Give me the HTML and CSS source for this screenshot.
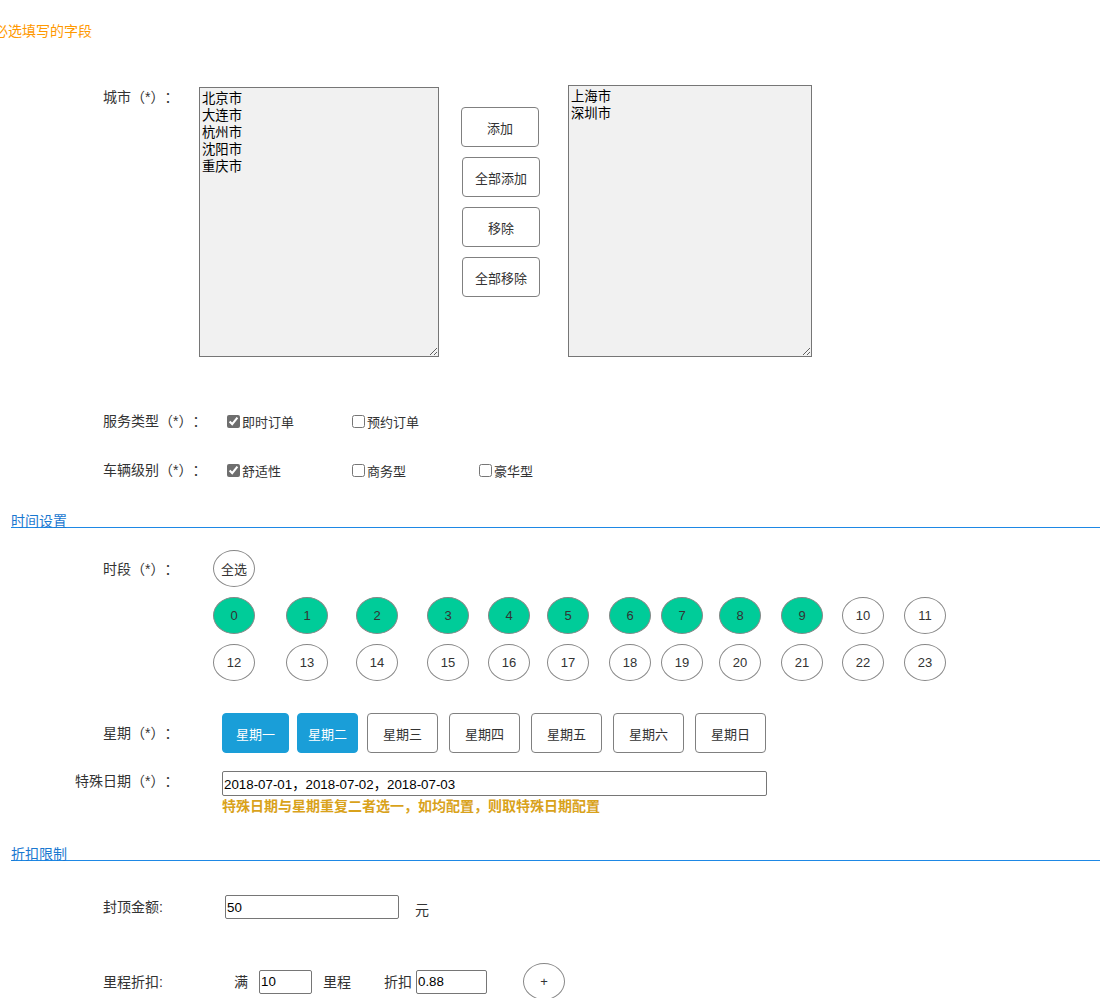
FILE: index.html
```html
<!DOCTYPE html>
<html lang="zh-CN">
<head>
<meta charset="utf-8">
<title>配置</title>
<link rel="stylesheet" href="styles.css">
</head>
<body>
<div class="page">
  <p class="required-note">必选填写的字段</p>

  <div class="row city-row">
    <span class="label city-label">城市（*）：</span>
    <textarea class="list list-left">北京市
大连市
杭州市
沈阳市
重庆市</textarea>
    <div class="transfer-btns">
      <button class="t-btn t-btn-first">添加</button>
      <button class="t-btn">全部添加</button>
      <button class="t-btn">移除</button>
      <button class="t-btn">全部移除</button>
    </div>
    <textarea class="list list-right">上海市
深圳市</textarea>
  </div>

  <div class="row check-row service-row">
    <span class="label check-label">服务类型（*）：</span>
    <label class="opt"><input type="checkbox" checked><span>即时订单</span></label>
    <label class="opt"><input type="checkbox"><span>预约订单</span></label>
  </div>

  <div class="row check-row vehicle-row">
    <span class="label check-label">车辆级别（*）：</span>
    <label class="opt"><input type="checkbox" checked><span>舒适性</span></label>
    <label class="opt"><input type="checkbox"><span>商务型</span></label>
    <label class="opt opt-third"><input type="checkbox"><span>豪华型</span></label>
  </div>

  <div class="section-title time-title">时间设置</div>

  <div class="row period-row">
    <span class="label period-label">时段（*）：</span>
    <button class="circle">全选</button>
  </div>

  <div class="hours">
    <button class="circle on">0</button>
    <button class="circle on">1</button>
    <button class="circle on">2</button>
    <button class="circle on">3</button>
    <button class="circle on">4</button>
    <button class="circle on">5</button>
    <button class="circle on">6</button>
    <button class="circle on">7</button>
    <button class="circle on">8</button>
    <button class="circle on">9</button>
    <button class="circle">10</button>
    <button class="circle">11</button>
    <button class="circle">12</button>
    <button class="circle">13</button>
    <button class="circle">14</button>
    <button class="circle">15</button>
    <button class="circle">16</button>
    <button class="circle">17</button>
    <button class="circle">18</button>
    <button class="circle">19</button>
    <button class="circle">20</button>
    <button class="circle">21</button>
    <button class="circle">22</button>
    <button class="circle">23</button>
  </div>

  <div class="row week-row">
    <span class="label week-label">星期（*）：</span>
    <button class="week-btn on mon">星期一</button>
    <button class="week-btn on tue">星期二</button>
    <button class="week-btn wed">星期三</button>
    <button class="week-btn">星期四</button>
    <button class="week-btn">星期五</button>
    <button class="week-btn">星期六</button>
    <button class="week-btn">星期日</button>
  </div>

  <div class="row date-row">
    <span class="label date-label">特殊日期（*）：</span>
    <input class="text-input date-input" type="text" value="2018-07-01，2018-07-02，2018-07-03">
  </div>
  <p class="hint">特殊日期与星期重复二者选一，如均配置，则取特殊日期配置</p>

  <div class="section-title discount-title">折扣限制</div>

  <div class="row cap-row">
    <span class="label cap-label">封顶金额:</span>
    <input class="text-input cap-input" type="text" value="50">
    <span class="unit">元</span>
  </div>

  <div class="row mile-row">
    <span class="label mile-label">里程折扣:</span>
    <span class="word">满</span>
    <input class="text-input small-input" type="text" value="10">
    <span class="word mile-word">里程</span>
    <span class="word disc-word">折扣</span>
    <input class="text-input rate-input" type="text" value="0.88">
    <button class="circle plus">+</button>
  </div>
</div>
</body>
</html>
```

FILE: styles.css
```css
html, body {
  margin: 0;
  padding: 0;
  background: #fff;
}

body {
  font-family: "Liberation Sans", "Noto Sans CJK SC", sans-serif;
  font-size: 14px;
  color: #333;
  overflow: hidden;
  text-spacing-trim: space-all;
}

.page {
  width: 1100px;
}

.required-note {
  margin: 21px 0 0 -6px;
  line-height: 20px;
  color: #ff9900;
}

.row {
  display: flex;
}

.label {
  flex: none;
  line-height: 20px;
  color: #333;
  text-spacing-trim: space-all;
}

/* City transfer */
.city-row {
  margin-top: 44px;
  align-items: flex-start;
}

.city-label {
  margin-left: 103px;
  width: 96px;
  margin-top: 2px;
}

.list {
  box-sizing: border-box;
  margin: 0;
  padding: 2px;
  border: 1px solid #767676;
  background: #f1f1f1;
  font-family: "Liberation Sans", "Noto Sans CJK SC", sans-serif;
  font-size: 13.33px;
  line-height: 17px;
  color: #000;
  overflow: hidden;
}

.list-left {
  width: 240px;
  height: 270px;
  margin-top: 2px;
}

.list-right {
  width: 244px;
  height: 272px;
  margin-left: 28px;
}

.transfer-btns {
  display: flex;
  flex-direction: column;
  gap: 10px;
  margin-left: 23px;
  margin-top: 22px;
}

.t-btn {
  box-sizing: border-box;
  width: 78px;
  height: 40px;
  border: 1px solid #808080;
  border-radius: 4px;
  background: #fff;
  font-family: "Liberation Sans", "Noto Sans CJK SC", sans-serif;
  font-size: 13px;
  color: #333;
  padding: 0;
}

.t-btn-first {
  margin-left: -1px;
}

/* Checkbox rows */
.check-row {
  align-items: center;
  height: 20px;
}

.service-row {
  margin-top: 54px;
}

.vehicle-row {
  margin-top: 29px;
}

.check-label {
  margin-left: 103px;
  width: 124px;
}

.opt {
  display: inline-flex;
  align-items: center;
  width: 125px;
  font-size: 13px;
  color: #333;
}

.opt-third {
  margin-left: 2px;
}

.opt input {
  margin: 0 2px 0 0;
  width: 13px;
  height: 13px;
  accent-color: #6e6e6e;
}

/* Section titles */
.section-title {
  margin-left: 11px;
  line-height: 12px;
  height: 12px;
  color: #1a78d0;
  border-bottom: 1px solid #1e88e5;
}

.time-title {
  margin-top: 35px;
}

/* Period */
.period-row {
  margin-top: 22px;
  align-items: center;
}

.period-label {
  margin-left: 103px;
  width: 110px;
}

.circle {
  box-sizing: border-box;
  width: 42px;
  height: 37px;
  border: 1px solid #888;
  border-radius: 50%;
  background: #fff;
  padding: 0;
  font-family: "Liberation Sans", "Noto Sans CJK SC", sans-serif;
  font-size: 13px;
  color: #333;
}

.circle.on {
  background: #00cc99;
}

.hours {
  display: grid;
  grid-template-columns: 73px 70px 71px 61px 59px 62px 52px 58px 62px 61px 62px 42px;
  grid-auto-rows: 37px;
  row-gap: 10px;
  margin: 10px 0 0 213px;
}

/* Week */
.week-row {
  margin-top: 32px;
  align-items: center;
}

.week-label {
  margin-left: 103px;
  width: 119px;
}

.week-btn {
  box-sizing: border-box;
  height: 40px;
  width: 71px;
  margin-left: 11px;
  border: 1px solid #808080;
  border-radius: 4px;
  background: #fff;
  padding: 0;
  font-family: "Liberation Sans", "Noto Sans CJK SC", sans-serif;
  font-size: 13px;
  color: #333;
}

.week-btn.on {
  background: #1a9ed8;
  border-color: #1a9ed8;
  color: #fff;
}

.week-btn.mon {
  width: 67px;
  margin-left: 0;
}

.week-btn.tue {
  width: 61px;
  margin-left: 8px;
}

.week-btn.wed {
  margin-left: 9px;
}

/* Special date */
.date-row {
  margin-top: 18px;
  align-items: flex-start;
}

.date-label {
  margin-left: 75px;
  width: 147px;
}

.text-input {
  box-sizing: border-box;
  margin: 0;
  padding: 0 1px;
  border: 1px solid #767676;
  border-radius: 2px;
  background: #fff;
  font-family: "Liberation Sans", "Noto Sans CJK SC", sans-serif;
  font-size: 13.33px;
  color: #000;
  outline: none;
  text-spacing-trim: space-all;
}

.date-input {
  width: 545px;
  height: 25px;
}

.hint {
  margin: 0 0 0 222px;
  line-height: 20px;
  font-weight: bold;
  color: #d9a21b;
}

.discount-title {
  margin-top: 32px;
}

/* Discount rows */
.cap-row {
  margin-top: 34px;
  align-items: center;
}

.cap-label {
  margin-left: 103px;
  width: 122px;
}

.cap-input {
  width: 174px;
  height: 24px;
}

.unit {
  margin-left: 16px;
  margin-top: 4px;
}

.mile-row {
  margin-top: 44px;
  align-items: center;
}

.mile-label {
  margin-left: 103px;
  width: 131px;
}

.word {
  line-height: 20px;
}

.small-input {
  width: 53px;
  height: 24px;
  margin-left: 11px;
}

.mile-word {
  margin-left: 11px;
}

.disc-word {
  margin-left: 33px;
}

.rate-input {
  width: 71px;
  height: 24px;
  margin-left: 4px;
}

.circle.plus {
  margin-left: 36px;
}
```
